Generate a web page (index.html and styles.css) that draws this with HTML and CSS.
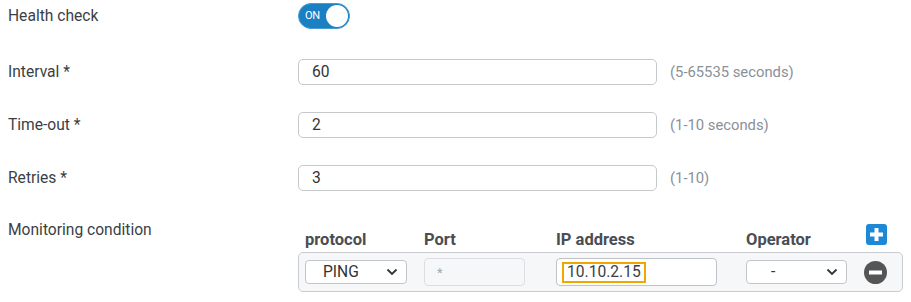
FILE: index.html
```html
<!DOCTYPE html>
<html>
<head>
<meta charset="utf-8">
<link rel="stylesheet" href="styles.css">
</head>
<body>
<div class="form">
  <div class="row row-toggle">
    <div class="label">Health check</div>
    <div class="field">
      <div class="toggle"><span class="toggle-text">ON</span><span class="knob"></span></div>
    </div>
  </div>
  <div class="row row-input">
    <div class="label">Interval *</div>
    <div class="field">
      <div class="input">60</div>
      <span class="hint">(5-65535 seconds)</span>
    </div>
  </div>
  <div class="row row-input">
    <div class="label">Time-out *</div>
    <div class="field">
      <div class="input">2</div>
      <span class="hint">(1-10 seconds)</span>
    </div>
  </div>
  <div class="row row-input">
    <div class="label">Retries *</div>
    <div class="field">
      <div class="input">3</div>
      <span class="hint">(1-10)</span>
    </div>
  </div>
  <div class="row row-monitor">
    <div class="label">Monitoring condition</div>
    <div class="table">
      <div class="cols head">
        <div class="th">protocol</div>
        <div class="th">Port</div>
        <div class="th">IP address</div>
        <div class="th">Operator</div>
        <div class="th">
          <span class="btn-add">
            <svg width="21" height="21" viewBox="0 0 21 21"><rect x="0" y="0" width="21" height="21" rx="3" fill="#1c88d6"/><rect x="4" y="8.5" width="13" height="4" fill="#fff"/><rect x="8.5" y="4" width="4" height="13" fill="#fff"/></svg>
          </span>
        </div>
      </div>
      <div class="cols body-row">
        <div class="cell">
          <div class="select select-proto"><span>PING</span>
            <svg class="chev" width="12" height="8" viewBox="0 0 12 8"><path d="M1.5 1.5 L6 6 L10.5 1.5" fill="none" stroke="#333" stroke-width="1.8"/></svg>
          </div>
        </div>
        <div class="cell"><div class="ctl port">*</div></div>
        <div class="cell"><div class="ctl ip"><span class="mark">10.10.2.15</span></div></div>
        <div class="cell">
          <div class="select select-op"><span>-</span>
            <svg class="chev" width="12" height="8" viewBox="0 0 12 8"><path d="M1.5 1.5 L6 6 L10.5 1.5" fill="none" stroke="#333" stroke-width="1.8"/></svg>
          </div>
        </div>
        <div class="cell">
          <svg class="btn-remove" width="23" height="23" viewBox="0 0 23 23"><circle cx="11.5" cy="11.5" r="11.5" fill="#555555"/><rect x="5" y="9.5" width="13" height="4" fill="#fff"/></svg>
        </div>
      </div>
    </div>
  </div>
</div>
</body>
</html>
```

FILE: styles.css
```css
html, body {
  margin: 0;
  padding: 0;
  background: #ffffff;
}

body {
  font-family: Roboto, "Liberation Sans", sans-serif;
  font-size: 15.6px;
  color: #3b3f45;
}

.form {
  padding: 3px 0 0 8px;
}

.row {
  display: grid;
  grid-template-columns: 290px 1fr;
  align-items: center;
}

.row-toggle {
  height: 26px;
  margin-bottom: 30px;
}

.row-input {
  height: 26px;
  margin-bottom: 27px;
}

.row-monitor {
  align-items: start;
  margin-top: 30px;
}

.label {
  line-height: 18px;
}

.field {
  display: flex;
  align-items: center;
}

.toggle {
  position: relative;
  width: 52px;
  height: 26px;
  border-radius: 13px;
  background: #1b7fc4;
  box-sizing: border-box;
  border: 1px solid #4b9bd3;
}

.toggle-text {
  position: absolute;
  left: 6px;
  top: 6px;
  font-size: 11px;
  line-height: 12px;
  color: #ffffff;
  letter-spacing: -0.2px;
}

.knob {
  position: absolute;
  right: 1px;
  top: 1px;
  width: 22px;
  height: 22px;
  border-radius: 50%;
  background: #ffffff;
}

.input {
  width: 359px;
  height: 26px;
  box-sizing: border-box;
  border: 1px solid #c6c8cc;
  border-radius: 5px;
  padding-left: 13px;
  line-height: 24px;
  color: #333333;
}

.hint {
  margin-left: 13px;
  color: #8a9099;
  font-size: 14.8px;
}

.table {
  width: 605px;
  padding-top: 2px;
}

.cols {
  display: grid;
  grid-template-columns: 119px 132px 190px 118px 23px;
}

.head {
  padding-left: 7px;
  height: 22px;
  align-items: center;
  margin-bottom: 7px;
}

.th {
  font-weight: bold;
  font-size: 16.5px;
  color: #4a4d52;
  line-height: 18px;
  padding-top: 8px;
}

.th:last-child {
  padding-top: 0;
}

.btn-add {
  display: block;
  margin-left: 2px;
  margin-top: -4px;
  width: 21px;
  height: 21px;
}

.btn-add svg, .btn-remove {
  display: block;
}

.body-row {
  box-sizing: border-box;
  height: 40px;
  padding-left: 6px;
  border: 1px solid #c9cbcf;
  border-radius: 5px;
  background: #f6f7f8;
  align-items: center;
}

.cell {
  display: flex;
  align-items: center;
}

.select {
  box-sizing: border-box;
  width: 102px;
  height: 24px;
  border: 1px solid #c3c5c9;
  border-radius: 4px;
  background: #ffffff;
  display: flex;
  align-items: center;
  justify-content: space-between;
  padding: 0 8px 0 17px;
  color: #333333;
}

.select-op {
  width: 101px;
  padding-left: 24px;
}

.ctl {
  box-sizing: border-box;
  height: 28px;
  border-radius: 4px;
  display: flex;
  align-items: center;
}

.port {
  width: 101px;
  background: #f6f7f8;
  border: 1px solid #dcdee1;
  padding-left: 12px;
  color: #a4a8ae;
  font-size: 13px;
}

.ip {
  width: 161px;
  background: #ffffff;
  border: 1px solid #bfc2c6;
  padding-left: 5px;
  color: #333333;
}

.mark {
  display: inline-block;
  box-sizing: border-box;
  width: 84px;
  height: 21px;
  line-height: 17px;
  border: 2px solid #f2a602;
  padding-left: 3px;
  color: #3a3d45;
}

.btn-remove {
  margin-left: 0;
}
```
